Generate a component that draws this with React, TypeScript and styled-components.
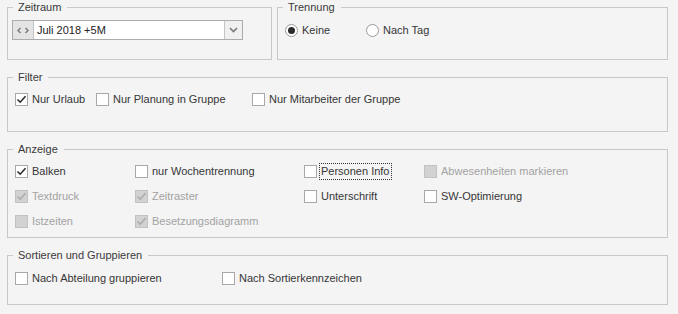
import React from 'react';
import styled, { createGlobalStyle } from 'styled-components';

const GlobalStyle = createGlobalStyle`
  html, body {
    margin: 0;
    padding: 0;
    background: #f4f4f4;
  }
  body {
    font-family: "Liberation Sans", Arial, sans-serif;
    font-size: 11px;
    color: #363636;
  }
`;

const SPage = styled.div`
  width: 678px;
  height: 314px;
  box-sizing: border-box;
  padding: 0 10px 0 7px;
  display: flex;
  flex-direction: column;
  gap: 10px;
`;

const STopRow = styled.div`
  display: flex;
  gap: 5px;
`;

const SGroup = styled.fieldset<{ $width?: number }>`
  margin: 0;
  padding: 0;
  border: 1px solid #c8c8c8;
  min-width: 0;
  box-sizing: border-box;
  width: ${(p) => (p.$width ? `${p.$width}px` : 'auto')};
  flex: ${(p) => (p.$width ? 'none' : '1 1 0')};
`;

const SLegend = styled.legend`
  margin-left: 5px;
  padding: 0 6px 0 5px;
  line-height: 14px;
  color: #3a3a3a;
`;

const SBody = styled.div<{ $h: number; $pt: number; $pl?: number }>`
  height: ${(p) => p.$h}px;
  box-sizing: border-box;
  padding: ${(p) => p.$pt}px 0 0 ${(p) => p.$pl ?? 7}px;
`;

const SCombo = styled.div`
  display: flex;
  width: 231px;
  height: 20px;
  box-sizing: border-box;
  border: 1px solid #ababab;
  background: #fff;
`;

const SNav = styled.div`
  width: 20px;
  background: #e4e4e4;
  border-right: 1px solid #c4c4c4;
  display: flex;
  align-items: center;
  justify-content: center;
`;

const SComboText = styled.div`
  flex: 1;
  display: flex;
  align-items: center;
  padding-left: 3px;
  color: #222;
`;

const SDrop = styled.div`
  width: 17px;
  background: #f0f0f0;
  border-left: 1px solid #c4c4c4;
  display: flex;
  align-items: center;
  justify-content: center;
`;

const SRow = styled.div<{ $cols: string }>`
  display: grid;
  grid-template-columns: ${(p) => p.$cols};
  align-items: center;
  height: 16px;
`;

const SGrid = styled.div`
  display: grid;
  grid-template-columns: 120px 169px 120px 1fr;
  grid-auto-rows: 16px;
  row-gap: 9px;
  align-items: center;
`;

const SItem = styled.label<{ $disabled?: boolean }>`
  display: flex;
  align-items: center;
  gap: 4px;
  white-space: nowrap;
  color: ${(p) => (p.$disabled ? '#a2a2a2' : '#363636')};
`;

const SBox = styled.span<{ $disabled?: boolean }>`
  width: 13px;
  height: 13px;
  box-sizing: border-box;
  border: 1px solid ${(p) => (p.$disabled ? '#c2c2c2' : '#a8a8a8')};
  background: ${(p) => (p.$disabled ? '#d2d2d2' : '#fff')};
  display: flex;
  align-items: center;
  justify-content: center;
  flex: none;
`;

const SRadio = styled.span<{ $on?: boolean }>`
  width: 13px;
  height: 13px;
  box-sizing: border-box;
  border-radius: 50%;
  border: 1px solid #9a9a9a;
  background: #fff;
  display: flex;
  align-items: center;
  justify-content: center;
  flex: none;
  &::after {
    content: '';
    width: 7px;
    height: 7px;
    border-radius: 50%;
    background: ${(p) => (p.$on ? '#2b2b2b' : 'transparent')};
  }
`;

const SText = styled.span<{ $focus?: boolean }>`
  line-height: 15px;
  padding: 0 ${(p) => (p.$focus ? '1px' : '0')};
  margin-left: ${(p) => (p.$focus ? '-1px' : '0')};
  outline: ${(p) => (p.$focus ? '1px dotted #333' : 'none')};
`;

const Check = ({ color }: { color: string }) => (
  <svg width="11" height="11" viewBox="0 0 11 11">
    <path d="M1.5 5.5 L4.2 8.2 L9.5 2.2" fill="none" stroke={color} strokeWidth="1.6" />
  </svg>
);

type CbProps = { label: string; checked?: boolean; disabled?: boolean; focus?: boolean };

const CheckBox = ({ label, checked, disabled, focus }: CbProps) => (
  <SItem $disabled={disabled}>
    <SBox $disabled={disabled}>{checked && <Check color={disabled ? '#a9a9a9' : '#2a2a2a'} />}</SBox>
    <SText $focus={focus}>{label}</SText>
  </SItem>
);

const Radio = ({ label, on }: { label: string; on?: boolean }) => (
  <SItem>
    <SRadio $on={on} />
    <SText>{label}</SText>
  </SItem>
);

const App = () => (
  <>
    <GlobalStyle />
    <SPage>
      <STopRow>
        <SGroup $width={265}>
          <SLegend>Zeitraum</SLegend>
          <SBody $h={45} $pt={6} $pl={4}>
            <SCombo>
              <SNav>
                <svg width="12" height="7" viewBox="0 0 12 7">
                  <path d="M3.5 1 L1 3.5 L3.5 6 M8.5 1 L11 3.5 L8.5 6" fill="none" stroke="#7a7a7a" strokeWidth="1.4" />
                </svg>
              </SNav>
              <SComboText>Juli 2018 +5M</SComboText>
              <SDrop>
                <svg width="9" height="6" viewBox="0 0 9 6">
                  <path d="M1 1 L4.5 4.5 L8 1" fill="none" stroke="#7a7a7a" strokeWidth="1.6" />
                </svg>
              </SDrop>
            </SCombo>
          </SBody>
        </SGroup>
        <SGroup>
          <SLegend>Trennung</SLegend>
          <SBody $h={45} $pt={8}>
            <SRow $cols="81px 1fr">
              <Radio label="Keine" on />
              <Radio label="Nach Tag" />
            </SRow>
          </SBody>
        </SGroup>
      </STopRow>

      <SGroup $width={661}>
        <SLegend>Filter</SLegend>
        <SBody $h={47} $pt={7}>
          <SRow $cols="81px 156px 1fr">
            <CheckBox label="Nur Urlaub" checked />
            <CheckBox label="Nur Planung in Gruppe" />
            <CheckBox label="Nur Mitarbeiter der Gruppe" />
          </SRow>
        </SBody>
      </SGroup>

      <SGroup $width={661}>
        <SLegend>Anzeige</SLegend>
        <SBody $h={81} $pt={7}>
          <SGrid>
            <CheckBox label="Balken" checked />
            <CheckBox label="nur Wochentrennung" />
            <CheckBox label="Personen Info" focus />
            <CheckBox label="Abwesenheiten markieren" disabled />
            <CheckBox label="Textdruck" checked disabled />
            <CheckBox label="Zeitraster" checked disabled />
            <CheckBox label="Unterschrift" />
            <CheckBox label="SW-Optimierung" />
            <CheckBox label="Istzeiten" disabled />
            <CheckBox label="Besetzungsdiagramm" checked disabled />
          </SGrid>
        </SBody>
      </SGroup>

      <SGroup $width={661}>
        <SLegend>Sortieren und Gruppieren</SLegend>
        <SBody $h={42} $pt={8}>
          <SRow $cols="207px 1fr">
            <CheckBox label="Nach Abteilung gruppieren" />
            <CheckBox label="Nach Sortierkennzeichen" />
          </SRow>
        </SBody>
      </SGroup>
    </SPage>
  </>
);

export default App;
